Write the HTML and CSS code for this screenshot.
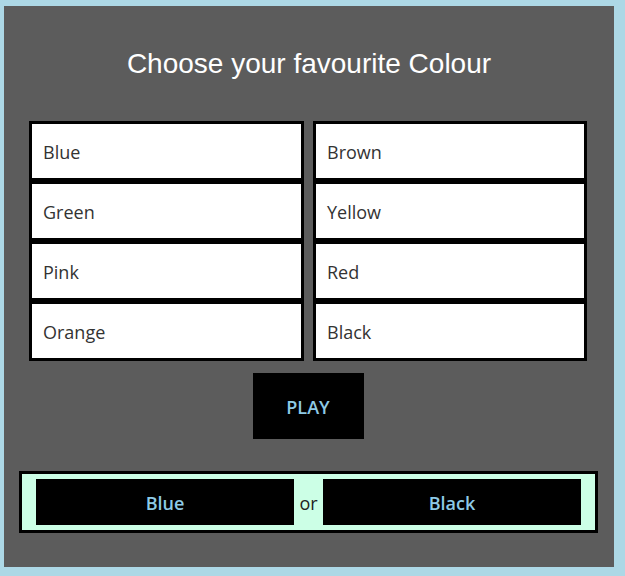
FILE: index.html
```html
<!DOCTYPE html>
<html>
<head>
<meta charset="utf-8">
<link rel="stylesheet" href="styles.css">
</head>
<body>
<div class="card">
  <h1 class="title">Choose your favourite Colour</h1>
  <div class="options">
    <div class="option">Blue</div>
    <div class="option">Brown</div>
    <div class="option">Green</div>
    <div class="option">Yellow</div>
    <div class="option">Pink</div>
    <div class="option">Red</div>
    <div class="option">Orange</div>
    <div class="option">Black</div>
  </div>
  <div class="play-row">
    <button class="play">PLAY</button>
  </div>
  <div class="versus">
    <button class="pick">Blue</button>
    <span class="or">or</span>
    <button class="pick">Black</button>
  </div>
</div>
</body>
</html>
```
FILE: styles.css
```css
html, body {
  margin: 0;
  padding: 0;
}
body {
  background: #add8e6;
  padding: 6px 0 0 4px;
  width: 625px;
  height: 576px;
  box-sizing: border-box;
  overflow: hidden;
}
.card {
  width: 610px;
  height: 561px;
  background: #5c5c5c;
  box-sizing: border-box;
  padding-top: 42px;
}
.title {
  margin: 0;
  font-family: "Liberation Sans", Arial, sans-serif;
  font-weight: normal;
  font-size: 28px;
  line-height: 32px;
  color: #ffffff;
  text-align: center;
}
.options {
  margin: 41px 0 0 25px;
  width: 558px;
  display: grid;
  grid-template-columns: 275px 274px;
  column-gap: 9px;
  grid-auto-rows: 60px;
}
.option {
  border: 3px solid #000;
  background: #fff;
  display: flex;
  align-items: center;
  padding: 2px 0 0 11px;
  font-family: "Open Sans", "Noto Sans", sans-serif;
  font-size: 18px;
  color: #333;
}
.play-row {
  display: flex;
  justify-content: center;
  margin-top: 12px;
}
.play {
  width: 111px;
  height: 66px;
  margin-right: 2px;
  background: #000;
  border: none;
  color: #8ecae6;
  font-family: "Open Sans", "Noto Sans", sans-serif;
  font-weight: 600;
  font-size: 18px;
  padding: 2px 0 0;
}
.versus {
  margin: 32px 0 0 15px;
  width: 579px;
  height: 62px;
  box-sizing: border-box;
  border: 3px solid #000;
  background: #ccffe6;
  padding: 5px 14px;
  display: flex;
  justify-content: space-between;
  align-items: center;
}
.pick {
  width: 258px;
  height: 46px;
  background: #000;
  border: none;
  color: #8ecae6;
  font-family: "Open Sans", "Noto Sans", sans-serif;
  font-weight: 600;
  font-size: 18px;
  padding: 2px 0 0;
}
.or {
  font-family: "Open Sans", "Noto Sans", sans-serif;
  font-size: 18px;
  color: #222;
  padding-top: 2px;
}
```
